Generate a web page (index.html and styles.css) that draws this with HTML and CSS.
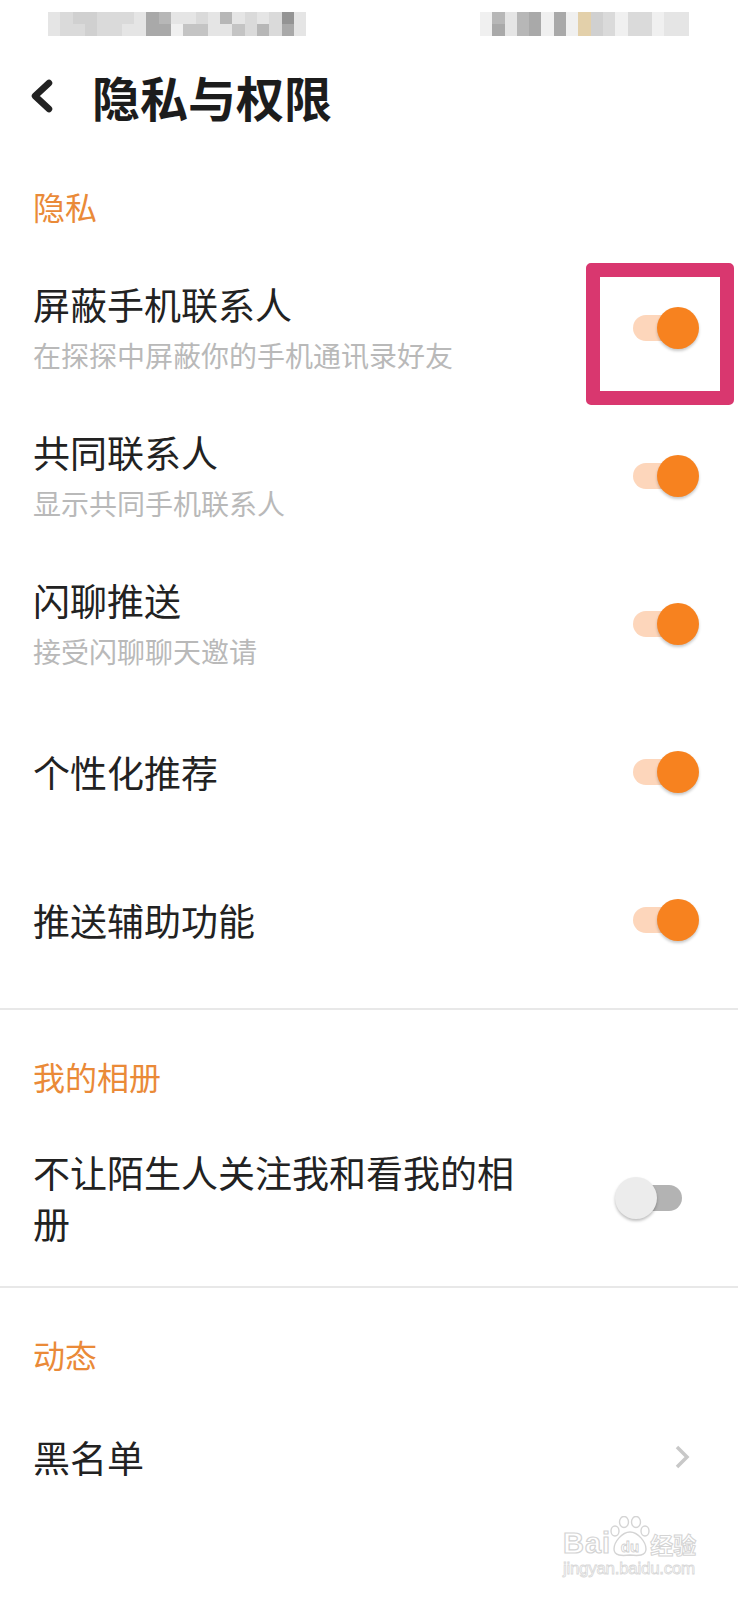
FILE: index.html
```html
<!DOCTYPE html>
<html lang="zh">
  <head>
    <title>隐私与权限</title>
    <meta charset="UTF-8" />
    <meta name="viewport" content="width=device-width, initial-scale=1" />
    <link rel="stylesheet" href="styles.css">
  </head>
  <body>
    <!-- 状态栏（已打码） -->
    <div class="statusBar">
      <div class="blur">
        <span class="b"></span><span class="b"></span>
        <span class="c"></span><span class="c"></span>
        <span class="d"></span><span class="c"></span>
        <span class="d"></span><span class="d"></span>
        <span class="c"></span><span class="c"></span>
        <span class="c"></span><span class="c"></span>
        <span class="c"></span><span class="b"></span>
        <span class="b"></span><span class="b"></span>
        <span class="g"></span><span class="g"></span>
        <span class="f"></span><span class="g"></span>
        <span class="b"></span><span class="a"></span>
        <span class="b"></span><span class="e"></span>
        <span class="c"></span><span class="e"></span>
        <span class="b"></span><span class="b"></span>
        <span class="f"></span><span class="b"></span>
        <span class="b"></span><span class="e"></span>
        <span class="c"></span><span class="c"></span>
        <span class="b"></span><span class="f"></span>
        <span class="c"></span><span class="c"></span>
        <span class="h"></span><span class="g"></span>
        <span class="b"></span><span class="b"></span>
      </div>
      <div class="blur">
        <span class="a"></span><span class="a"></span>
        <span class="f"></span><span class="g"></span>
        <span class="b"></span><span class="b"></span>
        <span class="f"></span><span class="f"></span>
        <span class="g"></span><span class="g"></span>
        <span class="a"></span><span class="a"></span>
        <span class="g"></span><span class="g"></span>
        <span class="a"></span><span class="a"></span>
        <span class="t"></span><span class="t"></span>
        <span class="d"></span><span class="d"></span>
        <span class="c"></span><span class="c"></span>
        <span class="a"></span><span class="a"></span>
        <span class="c"></span><span class="c"></span>
        <span class="c"></span><span class="c"></span>
        <span class="a"></span><span class="a"></span>
        <span class="b"></span><span class="b"></span>
        <span class="b"></span><span class="b"></span>
      </div>
    </div>

    <div class="navBar">
      <svg class="back" width="24" height="36" viewBox="0 0 24 36">
        <path d="M20 5 L6 18 L20 31" fill="none" stroke="#222" stroke-width="6.5"
          stroke-linecap="round" stroke-linejoin="round" />
      </svg>
      <h1 class="title">隐私与权限</h1>
    </div>

    <div class="section">
      <div class="sectionHead">隐私</div>
      <div class="row">
        <div class="text">
          <div class="name">屏蔽手机联系人</div>
          <div class="desc">在探探中屏蔽你的手机通讯录好友</div>
        </div>
        <div class="switch"><i class="track"></i><i class="thumb"></i></div>
        <div class="mark"></div>
      </div>
      <div class="row">
        <div class="text">
          <div class="name">共同联系人</div>
          <div class="desc">显示共同手机联系人</div>
        </div>
        <div class="switch"><i class="track"></i><i class="thumb"></i></div>
      </div>
      <div class="row">
        <div class="text">
          <div class="name">闪聊推送</div>
          <div class="desc">接受闪聊聊天邀请</div>
        </div>
        <div class="switch"><i class="track"></i><i class="thumb"></i></div>
      </div>
      <div class="row">
        <div class="text">
          <div class="name">个性化推荐</div>
        </div>
        <div class="switch"><i class="track"></i><i class="thumb"></i></div>
      </div>
      <div class="row">
        <div class="text">
          <div class="name">推送辅助功能</div>
        </div>
        <div class="switch"><i class="track"></i><i class="thumb"></i></div>
      </div>
    </div>

    <div class="section">
      <div class="sectionHead">我的相册</div>
      <div class="row">
        <div class="text">
          <div class="name wrap">不让陌生人关注我和看我的相册</div>
        </div>
        <div class="switch off"><i class="track"></i><i class="thumb"></i></div>
      </div>
    </div>

    <div class="section last">
      <div class="sectionHead">动态</div>
      <div class="row short">
        <div class="text">
          <div class="name">黑名单</div>
        </div>
        <svg class="more" width="16" height="24" viewBox="0 0 16 24">
          <path d="M3 2 L13 12 L3 22" fill="none" stroke="#c8c8c8" stroke-width="3.5" />
        </svg>
      </div>
    </div>

    <!-- 水印 -->
    <div class="watermark">
      <div class="wmLogo">
        <span class="wmBai">Bai</span>
        <svg class="paw" width="44" height="42" viewBox="0 0 44 42">
          <g fill="#fff" stroke="#d4d4d4" stroke-width="1.4">
            <ellipse cx="7" cy="15" rx="4" ry="5" />
            <ellipse cx="16" cy="6" rx="4.5" ry="5.5" />
            <ellipse cx="28" cy="6" rx="4.5" ry="5.5" />
            <ellipse cx="37" cy="15" rx="4" ry="5" />
            <path d="M22 16 C14 16 6 26 6 33 C6 40 14 40 22 39 C30 40 38 40 38 33 C38 26 30 16 22 16 Z" />
          </g>
          <text x="22" y="36" text-anchor="middle" class="wmDu">du</text>
        </svg>
        <span class="wmCn">经验</span>
      </div>
      <div class="wmUrl">jingyan.baidu.com</div>
    </div>
  </body>
</html>
```

FILE: styles.css
```css
body {
  margin: 0;
  padding: 0;
  position: relative;
  width: 738px;
  min-height: 1600px;
  background: #fff;
  color: #222;
  font-family: "Noto Sans CJK SC", "Noto Sans", sans-serif;
}

/* 状态栏 */
.statusBar {
  display: flex;
  justify-content: space-between;
  height: 52px;
  padding: 12px 49px 0 48px;
  box-sizing: border-box;
}
.blur {
  display: grid;
  grid-template-rows: 12px 12px;
  grid-auto-flow: column;
  grid-auto-columns: 12.3px;
  height: 24px;
  filter: blur(0.6px);
}
.a { background: #f0f0f0; }
.b { background: #e5e5e5; }
.c { background: #dadada; }
.d { background: #d0d0d0; }
.e { background: #c4c4c4; }
.f { background: #b7b7b7; }
.g { background: #a9a9a9; }
.h { background: #949494; }
.t { background: #e3d0aa; }

/* 标题栏 */
.navBar {
  display: flex;
  align-items: center;
  height: 88px;
  padding-left: 29px;
}
.back {
  flex: none;
}
.title {
  margin: 0 0 0 39px;
  font-size: 48px;
  font-weight: 700;
  line-height: 1;
  color: #1c1c1c;
}

/* 分组 */
.section {
  padding-bottom: 14px;
  border-bottom: 2px solid #e8e8e8;
}
.section.last {
  border-bottom: none;
}
.sectionHead {
  padding: 50px 33px 32px;
  font-size: 32px;
  line-height: 32px;
  color: #ea8a38;
}

.row {
  position: relative;
  display: flex;
  align-items: center;
  height: 148px;
  padding: 0 39px 0 33px;
}
.row.short {
  height: 110px;
  padding-right: 48px;
}
.text {
  flex: 1;
}
.name {
  font-size: 37px;
  line-height: 54px;
  color: #222;
}
.name.wrap {
  max-width: 500px;
  line-height: 51px;
}
.desc {
  font-size: 28px;
  line-height: 48px;
  color: #b9b9b9;
}

/* 开关 */
.switch {
  position: relative;
  flex: none;
  width: 84px;
  height: 42px;
}
.track {
  position: absolute;
  left: 18px;
  top: 8px;
  width: 49px;
  height: 26px;
  border-radius: 13px;
  background: #fdd6bb;
}
.thumb {
  position: absolute;
  top: 0;
  left: 42px;
  width: 42px;
  height: 42px;
  border-radius: 50%;
  background: #f7821f;
  box-shadow: 0 2px 3px rgba(0, 0, 0, 0.22);
}
.switch.off .track {
  background: #b3b3b3;
}
.switch.off .thumb {
  left: 0;
  background: #ececec;
  box-shadow: 0 2px 3px rgba(0, 0, 0, 0.25);
}

/* 红框标注 */
.mark {
  position: absolute;
  left: 586px;
  top: 9px;
  width: 148px;
  height: 142px;
  box-sizing: border-box;
  border: 14px solid #d9376f;
  border-radius: 5px;
}

.more {
  flex: none;
}

/* 水印 */
.watermark {
  position: absolute;
  left: 563px;
  top: 1514px;
  width: 136px;
  font-family: "Liberation Sans", sans-serif;
}
.wmLogo {
  display: flex;
  align-items: flex-end;
  height: 44px;
}
.wmBai {
  font-size: 29px;
  font-weight: 700;
  line-height: 30px;
  letter-spacing: 1px;
  color: #fff;
  -webkit-text-stroke: 1.2px #d4d4d4;
}
.paw {
  margin: 0 -2px 0 -3px;
}
.wmDu {
  font-family: "Liberation Sans", sans-serif;
  font-size: 15px;
  font-weight: 700;
  fill: #fff;
  stroke: #cfcfcf;
  stroke-width: 0.8px;
}
.wmCn {
  font-family: "Noto Sans CJK SC", sans-serif;
  font-size: 23px;
  font-weight: 700;
  line-height: 28px;
  color: #fff;
  -webkit-text-stroke: 1px #d4d4d4;
}
.wmUrl {
  font-size: 17px;
  line-height: 22px;
  color: #fff;
  -webkit-text-stroke: 0.8px #d8d8d8;
  letter-spacing: -0.3px;
}
```
